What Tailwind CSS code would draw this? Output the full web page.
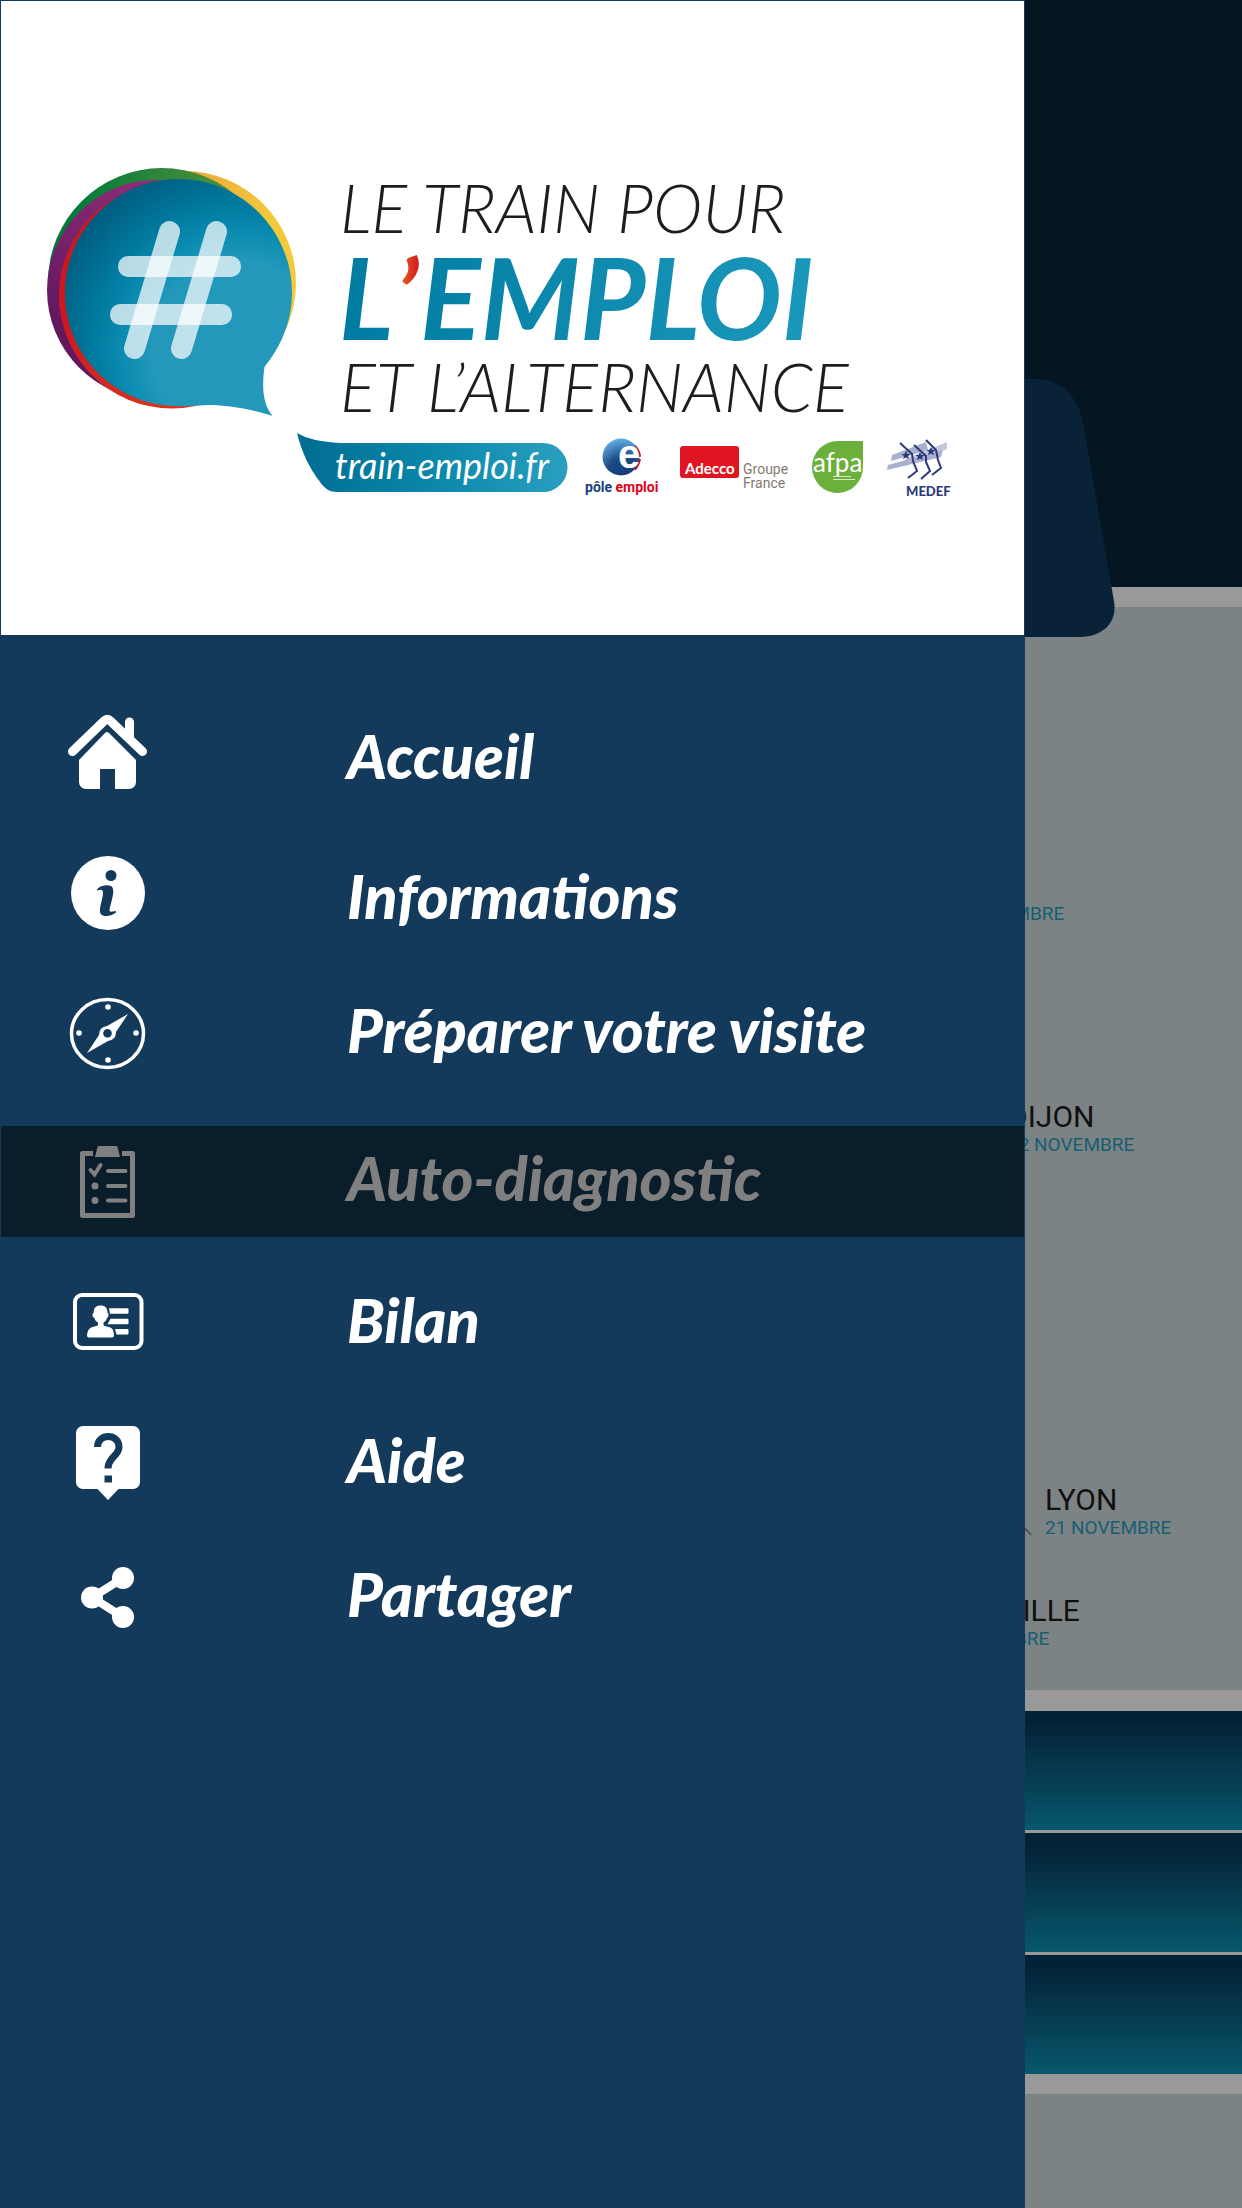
<!DOCTYPE html>
<html lang="fr">
<head>
<meta charset="utf-8">
<meta name="viewport" content="width=device-width, initial-scale=1">
<title>Le train pour l'emploi et l'alternance</title>
<script src="https://cdn.jsdelivr.net/npm/@tailwindcss/browser@4"></script>
</head>
<body class="bg-white font-['Lato',sans-serif]">
<div class="relative min-h-screen overflow-hidden">

  <!-- Home screen -->
  <main class="flex min-h-screen flex-col bg-white font-['Roboto',sans-serif]">
    <header class="relative h-[587px] bg-[#05263a]">
      <svg class="absolute left-[700px] top-[379px] z-10 h-[258px] w-[415px]" viewBox="0 0 415 258" aria-hidden="true"><path fill="#123a5c" d="M80 0H337C361 0 379 19 383 44L414 222C418 246 400 258 380 258H40C18 258 1 246 4 222L34 44C38 19 56 0 80 0Z"/></svg>
    </header>
    <section class="relative mt-5 h-[1083px] bg-[#cfdade]">
      <div class="absolute left-[938px] top-[263px]">
        <p class="whitespace-nowrap text-[30px] leading-8 text-[#1d1d1b]">PARIS</p>
        <p class="whitespace-nowrap text-[19px] leading-6 text-[#2b9dc0]">18 NOVEMBRE</p>
      </div>
      <div class="absolute left-[1008px] top-[494px]">
        <p class="whitespace-nowrap text-[30px] leading-8 text-[#1d1d1b]">DIJON</p>
        <p class="whitespace-nowrap text-[19px] leading-6 text-[#2b9dc0]">22 NOVEMBRE</p>
      </div>
      <svg class="absolute left-[1010px] top-[900px] h-[30px] w-[24px]" viewBox="0 0 24 30" aria-hidden="true"><path d="M2 7L21 28" stroke="#777" stroke-width="1.500"/></svg>
      <div class="absolute left-[1045px] top-[877px]">
        <p class="whitespace-nowrap text-[30px] leading-8 text-[#1d1d1b]">LYON</p>
        <p class="whitespace-nowrap text-[19px] leading-6 text-[#2b9dc0]">21 NOVEMBRE</p>
      </div>
      <div class="absolute left-[923px] top-[988px]">
        <p class="whitespace-nowrap text-[30px] leading-8 text-[#1d1d1b]">MARSEILLE</p>
        <p class="whitespace-nowrap text-[19px] leading-6 text-[#2b9dc0]">20 NOVEMBRE</p>
      </div>
    </section>
    <div class="mt-[21px] flex flex-col gap-[3px]">
      <div class="h-[119px] bg-linear-to-b from-[#083a5d] from-10% to-[#0c93b4]"></div>
      <div class="h-[119px] bg-linear-to-b from-[#083a5d] from-10% to-[#0c93b4]"></div>
      <div class="h-[119px] bg-linear-to-b from-[#083a5d] from-10% to-[#0c93b4]"></div>
    </div>
    <footer class="mt-5 min-h-[113px] flex-1 bg-[#cfdade]"></footer>
  </main>

  <!-- Dimmer behind the drawer -->
  <div class="absolute inset-0 z-20 bg-black/40"></div>

  <!-- Drawer -->
  <aside class="absolute inset-y-0 left-0 z-30 w-[82.53%] bg-[#133a5b]">
    <div class="border border-b-0 border-[#133a5b] bg-white">
      <svg class="block w-full" viewBox="1 1 1023 634" role="img" aria-label="Le train pour l'emploi et l'alternance">
        <defs>
          <radialGradient id="bubble" gradientUnits="userSpaceOnUse" cx="240" cy="350" r="210"><stop offset=".42" stop-color="#2398bb"/><stop offset=".55" stop-color="#0b8db1"/><stop offset=".7" stop-color="#007a9f"/><stop offset="1" stop-color="#005577"/></radialGradient>
          <linearGradient id="green"><stop offset=".1" stop-color="#007a3a"/><stop offset="1" stop-color="#6a963c"/></linearGradient>
          <linearGradient id="purple" x1="0" y1="1" x2=".5" y2="0"><stop offset=".3" stop-color="#62185f"/><stop offset="1" stop-color="#8f2d78"/></linearGradient>
          <linearGradient id="yellow" x1="0" y1="0" x2="1" y2=".5"><stop offset=".3" stop-color="#eb9f36"/><stop offset=".8" stop-color="#f2ca3c"/></linearGradient>
          <linearGradient id="red" x1="0" y1="0" x2=".5" y2="1"><stop offset=".5" stop-color="#cc181e"/><stop offset="1" stop-color="#d8351f"/></linearGradient>
          <linearGradient id="word" gradientUnits="userSpaceOnUse" x1="343" y1="0" x2="808" y2="0"><stop stop-color="#007ba1"/><stop offset="1" stop-color="#1a98bb"/></linearGradient>
          <linearGradient id="quote" gradientUnits="userSpaceOnUse" x1="400" y1="0" x2="420" y2="0"><stop stop-color="#e9641f"/><stop offset="1" stop-color="#d0131e"/></linearGradient>
          <linearGradient id="ribbon"><stop stop-color="#006d92"/><stop offset=".5" stop-color="#0a87ab"/><stop offset="1" stop-color="#2a9fc0"/></linearGradient>
          <radialGradient id="ball" cx=".6" cy="1" r="1"><stop stop-color="#123a78"/><stop offset=".5" stop-color="#1c4a87"/><stop offset="1" stop-color="#62aee0"/></radialGradient>
        </defs>
        <circle cx="184" cy="283" r="112" fill="url(#yellow)"/>
        <circle cx="162" cy="282" r="114" fill="url(#green)"/>
        <circle cx="157" cy="290" r="110" fill="url(#purple)"/>
        <circle cx="172" cy="295.500" r="113" fill="url(#red)"/>
        <path fill="url(#bubble)" d="M178.500 179C241 179 292 230 292 293C292 322 280 348 264.500 367C262 385 262 403 272.500 416C252 409 225 405 210 405C198 405 188 407 178 406C115 406 65 355 65 293C65 230 116 179 178.500 179Z"/>
        <g fill="#fff" fill-opacity=".72">
          <rect x="118" y="256" width="123" height="21" rx="10"/>
          <rect x="110" y="304" width="122" height="21" rx="10"/>
        </g>
        <g stroke="#fff" stroke-opacity=".72" stroke-width="21" stroke-linecap="round"><path d="M169.500 231.500L134.500 348.500"/><path d="M216.500 231.500L181.500 348.500"/></g>

        <g fill="#1d1d1b" font-family="Lato, sans-serif" font-style="italic" font-weight="300" font-size="67">
          <text x="340" y="233">LE TRAIN POUR</text>
          <text x="340" y="412">ET L’ALTERNANCE</text>
        </g>
        <text x="339" y="340" font-family="Lato, sans-serif" font-style="italic" font-weight="700" font-size="113" fill="url(#word)">L<tspan x="396" font-size="104" y="334" fill="url(#quote)">’</tspan><tspan x="420" y="340">EMPLOI</tspan></text>

        <path fill="url(#ribbon)" d="M297 433C307 439 322 442 340 443H543A24.500 24.500 0 0 1 543 492H337C330 492 325 489 320 482C309 468 301 450 297 433Z"/>
        <text x="335" y="479" font-family="Lato, sans-serif" font-style="italic" font-size="36" fill="#fff">train-emploi.fr</text>

        <path d="M634 446Q644 457 634 469" fill="none" stroke="#e3001b" stroke-width="4" stroke-dasharray="12 2"/>
        <circle cx="621" cy="457" r="18.500" fill="url(#ball)"/>
        <text x="618" y="468" font-family="Liberation Sans, sans-serif" font-weight="700" font-size="40" fill="#fff">e</text>
        <text x="585" y="492" font-family="Roboto, sans-serif" font-weight="700" font-size="14" fill="#17407c">pôle <tspan fill="#e2001a">emploi</tspan></text>

        <rect x="680" y="446" width="59" height="32" rx="3" fill="#e11521"/>
        <text x="685" y="474" font-family="Lato, sans-serif" font-weight="700" font-size="15" fill="#fff">Adecco</text>
        <g fill="#857a70" font-family="Roboto, sans-serif" font-size="14"><text x="743" y="474">Groupe</text><text x="743" y="488">France</text></g>

        <path d="M837.500 441H863V467A25.500 26 0 1 1 837.500 441Z" fill="#6bb03a"/>
        <text x="813" y="472" font-family="Lato, sans-serif" font-size="26" fill="#fff">afpa</text>
        <path d="M833 476.500h18M833 479.500h22" stroke="#d5ebc6" stroke-width="1"/>

        <g fill="#a9b1cd"><path d="M892 455L926 442L928 450L891 461Z"/><path d="M905 459L947 442L947 449L905 466Z" opacity=".7"/><path d="M888 465L943 450L941 457L887 470Z"/></g>
        <g fill="none" stroke="#2a3a7c" stroke-width="2"><path d="M900 443L912 454L913 461L917 471L908 478"/><path d="M914 445L926 456L926 462L930 471L921 479"/><path d="M926 440L936 450L938 460L941 468L932 475"/></g>
        <g fill="#2a3a7c"><path d="M906 451l1.500 3h3l-2.500 2 1 3-3-1.500-3 1.500 1-3-2.500-2h3z"/><path d="M920 452l1.500 3h3l-2.500 2 1 3-3-1.500-3 1.500 1-3-2.500-2h3z"/><path d="M931 447l1.500 3h3l-2.500 2 1 3-3-1.500-3 1.500 1-3-2.500-2h3z"/></g>
        <text x="906" y="496" font-family="Lato, sans-serif" font-weight="900" font-size="13" fill="#2a3a7c">MEDEF</text>
      </svg>
    </div>

    <nav class="pt-[67px] text-[61px] font-black italic leading-none text-white" aria-label="Menu">
      <ul>
        <li>
          <a href="#accueil" class="flex h-[111px] items-center pl-[50px]">
            <svg class="h-full w-[120px]" viewBox="0 0 120 111" fill="currentColor" aria-hidden="true"><path d="M22.500 49.500L54 19Q57.300 16 60.500 19L92.500 49.500" fill="none" stroke="currentColor" stroke-width="9" stroke-linecap="round"/><path d="M75 30V20a4.500 4.500 0 0 1 9 0V41Z"/><path d="M55 31Q57 29 59 31L86 58V80a7 7 0 0 1-7 7H65V67H50V87H36a7 7 0 0 1-7-7V58Z"/></svg>
            <span class="pb-1 pl-[177px]">Accueil</span>
          </a>
        </li>
        <li class="mt-[29px]">
          <a href="#informations" class="flex h-[111px] items-center pl-[50px]">
            <svg class="h-full w-[120px]" viewBox="0 0 120 111" fill="currentColor" aria-hidden="true"><circle cx="58" cy="51" r="37"/><g fill="#133a5b"><circle cx="61" cy="33.500" r="5.500"/><path d="M47 47.500C50 44 54 43.300 57.500 43.300C62 43.300 63.800 46 63.200 51C62.500 57 60 64 59.500 68C59.300 70 61 70 66 69V70.500C63 73 59 74 56.500 74C51 74 49.500 71.500 50 67C50.500 62 53 55 53 51C53 47.500 51.500 47.300 47 48.500Z"/></g></svg>
            <span class="pb-1 pl-[177px]">Informations</span>
          </a>
        </li>
        <li class="mt-[23px]">
          <a href="#visite" class="flex h-[111px] items-center pl-[50px]">
            <svg class="h-full w-[120px]" viewBox="0 0 120 111" fill="currentColor" aria-hidden="true"><ellipse cx="57.500" cy="57.500" rx="36" ry="34" fill="none" stroke="currentColor" stroke-width="3.500"/><circle cx="58" cy="31" r="2.800"/><circle cx="58" cy="84" r="2.800"/><circle cx="29" cy="57" r="2.800"/><circle cx="86" cy="57" r="2.800"/><path fill-rule="evenodd" d="M78 38L66 56Q66 64 58 65L37 77L49 59Q49 51 57 50ZM57.500 53a4.300 4.300 0 1 0 .01 0Z"/></svg>
            <span class="pb-1 pl-[177px]">Préparer votre visite</span>
          </a>
        </li>
        <li class="mx-px mt-[39px] bg-[#091d2b] text-[#808080]">
          <a href="#diagnostic" aria-current="page" class="flex h-[111px] items-center pl-[49px]">
            <svg class="h-full w-[120px]" viewBox="0 0 120 111" fill="currentColor" aria-hidden="true"><path d="M43 27.500H32.500V89.500H82.500V27.500H72" fill="none" stroke="currentColor" stroke-width="5" stroke-linejoin="round"/><path d="M47.500 21Q48 20 49 20H66Q67 20 67.500 21L70 31H45Z"/><path d="M40.500 44L44.500 48.500L50.500 39M58 45H75.500M58 60H75.500M58 74.500H75.500" fill="none" stroke="currentColor" stroke-width="4" stroke-linecap="round"/><circle cx="45" cy="60" r="3.500"/><circle cx="45" cy="74.500" r="3.500"/></svg>
            <span class="pb-2 pl-[177px]">Auto-diagnostic</span>
          </a>
        </li>
        <li class="mt-[29px]">
          <a href="#bilan" class="flex h-[111px] items-center pl-[50px]">
            <svg class="h-full w-[120px]" viewBox="0 0 120 111" fill="currentColor" aria-hidden="true"><rect x="25" y="29" width="66.500" height="53" rx="7" fill="none" stroke="currentColor" stroke-width="4"/><path d="M50.600 39.500C55 39.500 57.500 42 57.500 46.500C59.500 48 58.500 51 57 52C56.500 54 55 55.500 53.500 56.500V59C55 61 61 60 63 64Q64 67 64 69.500Q64 71.500 62 71.500H39Q37 71.500 37 69.500Q37 66 38.500 64C41 60 46 61 48 59V56.500C46 55.500 45 54 44.500 52C42 51 42 48 43.700 46.500C43.700 42 46 39.500 50.600 39.500Z"/><path d="M59 42.300H77.500Q78.500 42.300 78.500 43.300V46.800Q78.500 47.800 77.500 47.800H60ZM60.500 52.800H77.500Q78.500 52.800 78.500 53.800V57.300Q78.500 58.300 77.500 58.300H57.500ZM65 63H77.500Q78.500 63 78.500 64V67.500Q78.500 68.500 77.500 68.500H66.500Z"/></svg>
            <span class="pb-1 pl-[177px]">Bilan</span>
          </a>
        </li>
        <li class="mt-[29px]">
          <a href="#aide" class="flex h-[111px] items-center pl-[50px]">
            <svg class="h-full w-[120px]" viewBox="0 0 120 111" fill="currentColor" aria-hidden="true"><path d="M33 20H83a7 7 0 0 1 7 7V76a7 7 0 0 1-7 7H68.500L58 94L47.500 83H33a7 7 0 0 1-7-7V27a7 7 0 0 1 7-7Z"/><path d="M47.500 41C47.500 27 69 27 69 41C69 50 58 51 58 62.500" fill="none" stroke="#133a5b" stroke-width="7"/><path fill="#133a5b" d="M54.500 69.500h7.500v7h-7.500z"/></svg>
            <span class="pb-1 pl-[177px]">Aide</span>
          </a>
        </li>
        <li class="mt-[23px]">
          <a href="#partager" class="flex h-[111px] items-center pl-[50px]">
            <svg class="h-full w-[120px]" viewBox="0 0 120 111" fill="currentColor" aria-hidden="true"><path d="M73 38L42 57.500L73 77" fill="none" stroke="currentColor" stroke-width="8"/><circle cx="42" cy="57.500" r="11"/><circle cx="73" cy="38" r="11"/><circle cx="73" cy="77" r="11"/></svg>
            <span class="pb-1 pl-[177px]">Partager</span>
          </a>
        </li>
      </ul>
    </nav>
  </aside>
</div>
</body>
</html>
